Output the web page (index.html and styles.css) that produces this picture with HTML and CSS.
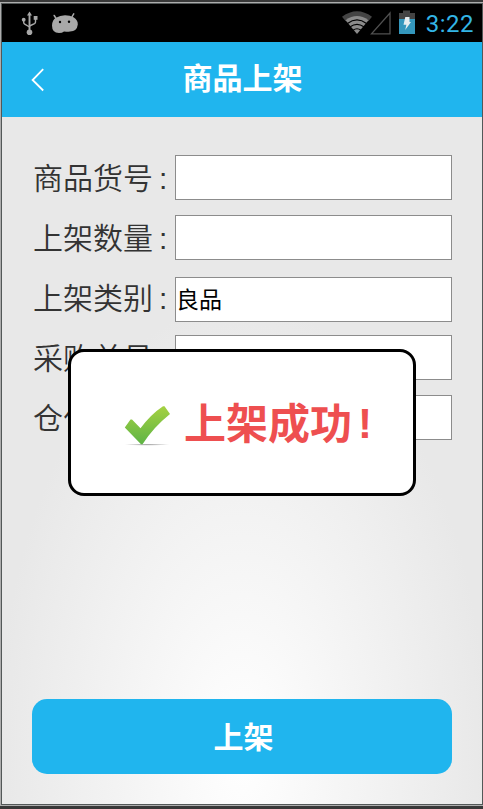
FILE: index.html
```html
<!DOCTYPE html>
<html lang="zh-CN">

<head>
  <meta charset="UTF-8">
  <meta name="viewport" content="width=device-width, initial-scale=1.0">
  <title>商品上架</title>
  <link rel="stylesheet" href="styles.css">
</head>

<body>
  <div class="screen">
    <div class="status-bar">
      <svg class="icon-usb" width="18" height="25" viewBox="0 0 18 25">
        <g fill="none" stroke="#a8a8a8" stroke-width="1.4">
          <path d="M8.5 3v18" stroke-width="1.9" />
          <path d="M2.7 8v3.5q0 1 1 1.6L8.5 16M14.5 7v4q0 1-1 1.6L8.5 15" />
        </g>
        <g fill="#a8a8a8">
          <path d="M8.5 .5L11 4.6H6z" />
          <circle cx="8.5" cy="21.3" r="2.8" />
          <circle cx="2.7" cy="8.7" r="1.9" />
          <rect x="12.7" y="5" width="3.8" height="3.8" />
        </g>
      </svg>
      <svg class="icon-droid" width="28" height="22" viewBox="0 0 28 22">
        <path d="M3.2 2.5l2.5 4M22.7.8L20.3 5" fill="none" stroke="#a8a8a8" stroke-width="1.5" stroke-linecap="round" />
        <path d="M5 4.8Q9 2.2 14 2.2t8.5 2q4.5 2.8 4.3 7.2Q26 18.2 19 18.6q-3 .1-6-.2-1.8 1.5-5 1.6Q1 20 1 12.5 1.2 7 5 4.8z" fill="#a8a8a8" />
        <circle cx="9" cy="9" r="1.2" fill="#000" />
        <circle cx="18" cy="8.7" r="1.2" fill="#000" />
      </svg>
      <div class="status-right">
        <svg class="icon-wifi" width="30" height="23" viewBox="0 0 30 23">
          <path d="M0 5.8Q15-5.2 30 5.8L26.5 10Q15 1.5 3.5 10z" fill="#444" />
          <path d="M3.5 9.2Q15 .8 26.5 9.2L15 23z" fill="#8b8b8b" />
          <path d="M5.5 12.4Q15 5.4 24.5 12.4M8.2 15.8Q15 10.8 21.8 15.8M11 19.2Q15 16.3 19 19.2" fill="none" stroke="#000" stroke-width="1.2" />
        </svg>
        <svg class="icon-signal" width="21" height="24" viewBox="0 0 21 24">
          <path d="M1.5 22.8H20V2z" fill="none" stroke="#505050" stroke-width="1.3" />
        </svg>
        <svg class="icon-battery" width="16" height="24" viewBox="0 0 16 24">
          <path d="M0 3h4V.5h7V3h5v6H0z" fill="#444" />
          <path d="M0 9h16v15H0z" fill="#3497bd" />
          <path d="M6.3 7h4.2v5H12l-5.8 8 1.2-5.2H4.5z" fill="#e6edf0" />
        </svg>
        <span class="clock">3:22</span>
      </div>
    </div>

    <div class="title-bar">
      <svg class="back" width="14" height="24" viewBox="0 0 14 24">
        <path d="M12.2 1.2L1.6 12l10.6 10.5" fill="none" stroke="#fff" stroke-width="1.8" />
      </svg>
      <h1 class="title">商品上架</h1>
    </div>

    <div class="content">
      <form class="form">
        <div class="row">
          <label class="label" for="goodsNo">商品货号</label><span class="colon">:</span>
          <input class="field" id="goodsNo" type="text">
        </div>
        <div class="row">
          <label class="label" for="count">上架数量</label><span class="colon">:</span>
          <input class="field" id="count" type="text">
        </div>
        <div class="row">
          <label class="label" for="type">上架类别</label><span class="colon">:</span>
          <input class="field field-type" id="type" type="text" value="良品">
        </div>
        <div class="row">
          <label class="label" for="orderNo">采购单号</label><span class="colon">:</span>
          <input class="field" id="orderNo" type="text">
        </div>
        <div class="row">
          <label class="label" for="position">仓位编号</label><span class="colon">:</span>
          <input class="field" id="position" type="text">
        </div>
      </form>
      <button class="submit" type="button">上架</button>
    </div>

    <div class="dialog">
      <svg class="check" width="48" height="42" viewBox="0 0 48 42">
        <defs>
          <linearGradient id="green" x1="0" y1="0" x2="0" y2="1">
            <stop offset="0" stop-color="#a5d142" />
            <stop offset="1" stop-color="#5eb445" />
          </linearGradient>
          <radialGradient id="shade">
            <stop offset="0" stop-color="#999" />
            <stop offset="1" stop-color="#fff" />
          </radialGradient>
        </defs>
        <ellipse cx="23" cy="39.7" rx="23" ry="1" fill="url(#shade)" />
        <path d="M.8 22.5L6.5 14.5l1.5 0 8.5 8.8Q26.5 9.5 39 1.2h1.5l5.5 7.7Q29 22.5 18.5 39.3h-1.5z" fill="url(#green)" />
      </svg>
      <span class="message">上架成功</span><span class="mark">!</span>
    </div>
  </div>
</body>

</html>
```
FILE: styles.css
```css
* {
  margin: 0;
  padding: 0;
  box-sizing: border-box;
}

body {
  font-family: 'Noto Sans CJK SC', sans-serif;
  height: 809px;
  background: #383838;
  padding-top: 2px;
  overflow: hidden;
}

.screen {
  position: relative;
  height: 802px;
  display: flex;
  flex-direction: column;
  border: 1px solid #535858;
  margin-left: 1px;
  margin-top: 1px;
  box-shadow: 0 0 0 1px #adadad;
  background: #000;
}

.status-bar {
  height: 38px;
  background: #000;
  display: flex;
  align-items: flex-start;
  padding: 7px 8px 0 19px;
}

.icon-droid {
  margin: 2px 0 0 12px;
}

.status-right {
  margin-left: auto;
  display: flex;
  align-items: flex-start;
}

.icon-wifi {
  margin-top: 0;
}

.icon-signal {
  margin: 0 0 0 -2px;
}

.icon-battery {
  margin: -1px 0 0 8px;
}

.clock {
  font-family: Roboto, sans-serif;
  font-size: 24px;
  line-height: 28px;
  color: #33b5e5;
  margin-left: 11px;
  margin-top: -1px;
  letter-spacing: 0.5px;
}

.title-bar {
  height: 75px;
  flex-shrink: 0;
  background: #20b5ee;
  display: grid;
  grid-template-columns: 60px 1fr 60px;
  align-items: center;
}

.back {
  margin: 0 0 0 29px;
}

.title {
  font-size: 30px;
  line-height: 44px;
  font-weight: 700;
  color: #fff;
  text-align: center;
  padding: 0 0 7px 1px;
}

.content {
  flex: 1;
  display: flex;
  flex-direction: column;
  justify-content: space-between;
  padding: 30px;
  background: radial-gradient(ellipse 245px 450px at 50% 635px, #fff 0%, #e8e8e8 100%);
}

.row {
  height: 60px;
  display: flex;
  align-items: center;
}

.label {
  width: 126px;
  margin-left: 1px;
  padding-bottom: 2px;
  font-size: 30px;
  font-weight: 350;
  color: #333;
  line-height: 58px;
  white-space: nowrap;
}

.colon {
  width: 16px;
  padding-top: 4px;
  font-family: 'Liberation Sans', sans-serif;
  font-size: 30px;
  line-height: 56px;
  color: #333;
}

.field {
  width: 277px;
  height: 45px;
  border: 1px solid #8c8c8c;
  background: #fff;
  font-family: inherit;
  font-size: 23px;
  color: #000;
}

.field-type {
  margin-top: 4px;
  padding-bottom: 2px;
}

.submit {
  height: 75px;
  border: none;
  border-radius: 15px;
  background: #20b5ee;
  font-family: inherit;
  font-size: 30px;
  font-weight: 700;
  color: #fff;
  padding: 0 0 4px 3px;
}

/* popup over the form */
.dialog {
  position: absolute;
  left: 66px;
  top: 345px;
  width: 348px;
  height: 147px;
  border: 3px solid #000;
  border-radius: 16px;
  background: #fff;
  display: flex;
  align-items: center;
  padding-left: 53px;
  font-size: 42px;
  font-weight: 700;
  line-height: 60px;
  color: #ee4f50;
}

.check {
  margin: 7px 12px 0 0;
}

.message {
  padding-bottom: 4px;
}

.mark {
  font-family: 'Liberation Sans', sans-serif;
  margin-left: 6px;
  padding-top: 3px;
}
```
